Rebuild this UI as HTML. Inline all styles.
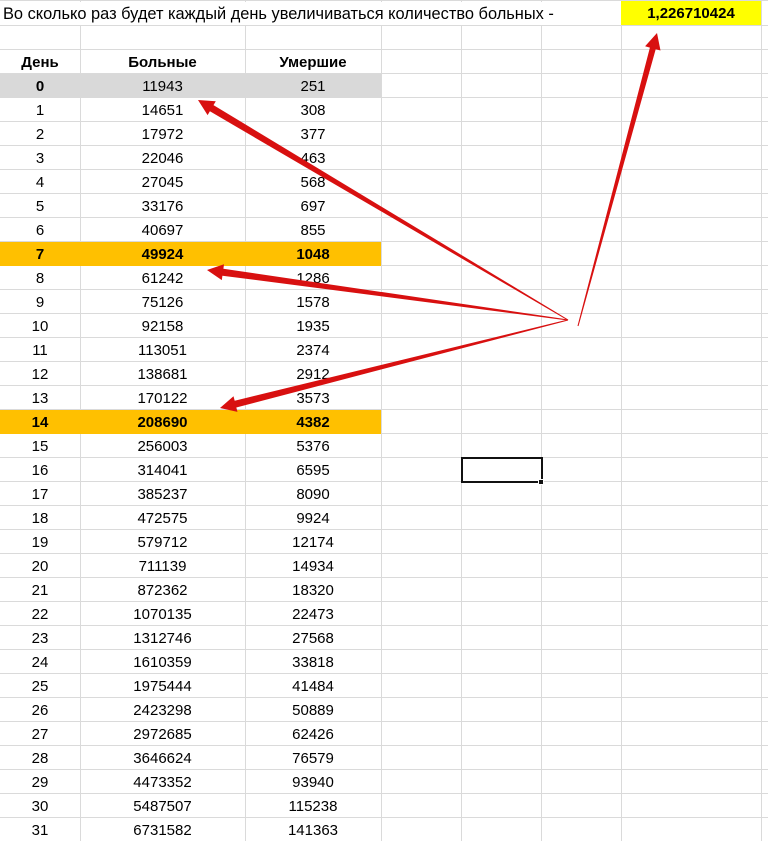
<!DOCTYPE html>
<html><head><meta charset="utf-8"><style>
*{margin:0;padding:0;box-sizing:border-box}
body{width:768px;height:841px;position:relative;overflow:hidden;background:#fff;font-family:"Liberation Sans","DejaVu Sans",sans-serif;font-size:15px;color:#000}
.grid{position:absolute;left:0;top:0;width:768px;height:841px;background:repeating-linear-gradient(to bottom,transparent 0 23px,#dadada 23px 24px);background-position:0 2px}
.v{position:absolute;top:0;width:1px;height:841px;background:#dadada}
.r{position:absolute;left:0;height:24px;display:flex;line-height:22px;padding-top:2px}
.r div{text-align:center}
.a{width:80px}.b{width:165px}.c{width:136px}
.hl{background:#ffc000;font-weight:bold}
.gr{background:#d9d9d9}
</style></head><body>
<div class="grid"></div>
<div class="v" style="left:80px"></div><div class="v" style="left:245px"></div><div class="v" style="left:381px"></div><div class="v" style="left:461px"></div><div class="v" style="left:541px"></div><div class="v" style="left:621px"></div><div class="v" style="left:761px"></div>
<div style="position:absolute;left:0;top:2px;width:621px;height:23px;background:#fff"></div>
<div style="position:absolute;left:3px;top:3px;line-height:23px;font-size:16.4px;white-space:nowrap">Во сколько раз будет каждый день увеличиваться количество больных -</div>
<div style="position:absolute;left:621px;top:1px;width:140px;height:24px;background:#ffff00;font-weight:bold;text-align:center;line-height:24px;padding-top:1px">1,226710424</div>
<div class="r" style="top:50px;font-weight:bold"><div class="a">День</div><div class="b">Больные</div><div class="c">Умершие</div></div>
<div class="r gr" style="top:74px"><div class="a" style="font-weight:bold">0</div><div class="b">11943</div><div class="c">251</div></div>
<div class="r" style="top:98px"><div class="a">1</div><div class="b">14651</div><div class="c">308</div></div>
<div class="r" style="top:122px"><div class="a">2</div><div class="b">17972</div><div class="c">377</div></div>
<div class="r" style="top:146px"><div class="a">3</div><div class="b">22046</div><div class="c">463</div></div>
<div class="r" style="top:170px"><div class="a">4</div><div class="b">27045</div><div class="c">568</div></div>
<div class="r" style="top:194px"><div class="a">5</div><div class="b">33176</div><div class="c">697</div></div>
<div class="r" style="top:218px"><div class="a">6</div><div class="b">40697</div><div class="c">855</div></div>
<div class="r hl" style="top:242px"><div class="a">7</div><div class="b">49924</div><div class="c">1048</div></div>
<div class="r" style="top:266px"><div class="a">8</div><div class="b">61242</div><div class="c">1286</div></div>
<div class="r" style="top:290px"><div class="a">9</div><div class="b">75126</div><div class="c">1578</div></div>
<div class="r" style="top:314px"><div class="a">10</div><div class="b">92158</div><div class="c">1935</div></div>
<div class="r" style="top:338px"><div class="a">11</div><div class="b">113051</div><div class="c">2374</div></div>
<div class="r" style="top:362px"><div class="a">12</div><div class="b">138681</div><div class="c">2912</div></div>
<div class="r" style="top:386px"><div class="a">13</div><div class="b">170122</div><div class="c">3573</div></div>
<div class="r hl" style="top:410px"><div class="a">14</div><div class="b">208690</div><div class="c">4382</div></div>
<div class="r" style="top:434px"><div class="a">15</div><div class="b">256003</div><div class="c">5376</div></div>
<div class="r" style="top:458px"><div class="a">16</div><div class="b">314041</div><div class="c">6595</div></div>
<div class="r" style="top:482px"><div class="a">17</div><div class="b">385237</div><div class="c">8090</div></div>
<div class="r" style="top:506px"><div class="a">18</div><div class="b">472575</div><div class="c">9924</div></div>
<div class="r" style="top:530px"><div class="a">19</div><div class="b">579712</div><div class="c">12174</div></div>
<div class="r" style="top:554px"><div class="a">20</div><div class="b">711139</div><div class="c">14934</div></div>
<div class="r" style="top:578px"><div class="a">21</div><div class="b">872362</div><div class="c">18320</div></div>
<div class="r" style="top:602px"><div class="a">22</div><div class="b">1070135</div><div class="c">22473</div></div>
<div class="r" style="top:626px"><div class="a">23</div><div class="b">1312746</div><div class="c">27568</div></div>
<div class="r" style="top:650px"><div class="a">24</div><div class="b">1610359</div><div class="c">33818</div></div>
<div class="r" style="top:674px"><div class="a">25</div><div class="b">1975444</div><div class="c">41484</div></div>
<div class="r" style="top:698px"><div class="a">26</div><div class="b">2423298</div><div class="c">50889</div></div>
<div class="r" style="top:722px"><div class="a">27</div><div class="b">2972685</div><div class="c">62426</div></div>
<div class="r" style="top:746px"><div class="a">28</div><div class="b">3646624</div><div class="c">76579</div></div>
<div class="r" style="top:770px"><div class="a">29</div><div class="b">4473352</div><div class="c">93940</div></div>
<div class="r" style="top:794px"><div class="a">30</div><div class="b">5487507</div><div class="c">115238</div></div>
<div class="r" style="top:818px"><div class="a">31</div><div class="b">6731582</div><div class="c">141363</div></div>
<div style="position:absolute;left:461px;top:457px;width:82px;height:26px;border:2px solid #111"></div>
<div style="position:absolute;left:538px;top:479px;width:6px;height:6px;background:#111;border:1px solid #fff"></div>
<svg style="position:absolute;left:0;top:0" width="768" height="841">
<g fill="#d81010">
<polygon points="568.3,319.6 213.5,105.1 215.8,101.3 198,100 207.6,115.1 209.9,111.3 567.7,320.4"/>
<polygon points="568.1,319.5 223.4,268.7 224.0,264.3 207,270 221.8,280.1 222.4,275.7 567.9,320.5"/>
<polygon points="568.1,320.5 236.3,407.5 237.5,411.9 220,408 233.5,396.3 234.7,400.7 567.9,319.5"/>
<polygon points="578.5,326.1 655.7,49.2 660.5,50.5 657,33 645.1,46.3 649.9,47.6 577.5,325.9"/>
</g>
</svg>
</body></html>
